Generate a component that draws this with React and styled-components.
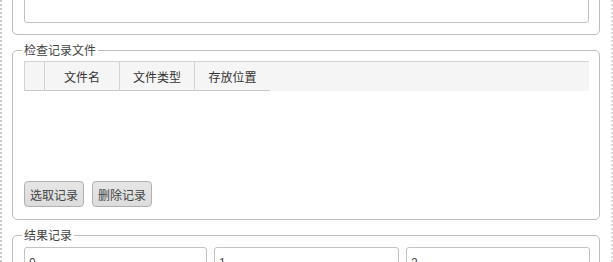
import React from "react";
import styled, { createGlobalStyle } from "styled-components";

const GlobalStyle = createGlobalStyle`
  html, body {
    margin: 0;
    padding: 0;
    background: #fff;
    overflow: hidden;
  }
  body {
    font-family: "Noto Sans CJK SC", "Microsoft YaHei", sans-serif;
    font-size: 12px;
    color: #333;
  }
`;

const Page = styled.div`
  width: 613px;
  height: 262px;
  box-sizing: border-box;
  overflow: hidden;
  border-left: 2px dotted #c8c8c8;
  border-right: 2px dotted #d8d8d8;
  padding-right: 1px;
`;

const Scroller = styled.div`
  margin-top: -63px;
  display: flex;
  flex-direction: column;
  gap: 8px;
  padding: 0 10px 0 10px;
`;

const Group = styled.fieldset`
  margin: 0;
  border: 1px solid #bdbdbd;
  border-radius: 5px;
  padding: ${(p) => p.$top || 3}px 10px ${(p) => p.$bottom || 11}px 11px;
  min-width: 0;
`;

const Legend = styled.legend`
  margin-left: -2px;
  padding: 0 2px;
  font-size: 12px;
  line-height: 14px;
  color: #444;
`;

const TextBox = styled.div`
  height: 80px;
  border: 1px solid #c2c2c2;
  border-radius: 3px;
  background: #fff;
`;

const Grid = styled.div`
  height: 113px;
  display: flex;
  flex-direction: column;
`;

const HeadRow = styled.div`
  display: flex;
  height: 29px;
  background: #f5f5f5;
  border-top: 1px solid #d2d2d2;
  border-left: 1px solid #d2d2d2;
`;

const HeadCell = styled.div`
  width: ${(p) => p.$w}px;
  box-sizing: border-box;
  display: flex;
  align-items: center;
  justify-content: center;
  border-right: ${(p) => (p.$last ? "none" : "1px solid #d2d2d2")};
  border-bottom: 1px solid #c8c8c8;
  color: #333;
  font-size: 12px;
`;

const ButtonRow = styled.div`
  display: flex;
  gap: 8px;
  margin-top: 7px;
`;

const Button = styled.button`
  height: 26px;
  padding: 0 5px;
  font-family: inherit;
  font-size: 12px;
  color: #444;
  background: linear-gradient(#e6e6e6, #dcdcdc);
  border: 1px solid #b0b0b0;
  border-radius: 4px;
`;

const Inputs = styled.div`
  display: grid;
  grid-template-columns: 183px 185px 184px;
  gap: 7px;
  margin-top: 2px;
`;

const Input = styled.div`
  height: 30px;
  border: 1px solid #c2c2c2;
  border-radius: 3px;
  padding: 8px 0 0 4px;
  color: #444;
  font-family: "Liberation Sans", Arial, sans-serif;
  font-size: 12px;
`;

const columns = [
  { w: 20, label: "" },
  { w: 75, label: "文件名" },
  { w: 75, label: "文件类型" },
  { w: 75, label: "存放位置", last: true },
];

export default function App() {
  return (
    <>
      <GlobalStyle />
      <Page>
        <Scroller>
          <Group>
            <TextBox />
          </Group>
          <Group $top={4} $bottom={12}>
            <Legend>检查记录文件</Legend>
            <Grid>
              <HeadRow>
                {columns.map((c, i) => (
                  <HeadCell key={i} $w={c.w} $last={c.last}>
                    {c.label}
                  </HeadCell>
                ))}
              </HeadRow>
            </Grid>
            <ButtonRow>
              <Button>选取记录</Button>
              <Button>删除记录</Button>
            </ButtonRow>
          </Group>
          <Group>
            <Legend>结果记录</Legend>
            <Inputs>
              <Input>0</Input>
              <Input>1</Input>
              <Input>2</Input>
            </Inputs>
          </Group>
        </Scroller>
      </Page>
    </>
  );
}
